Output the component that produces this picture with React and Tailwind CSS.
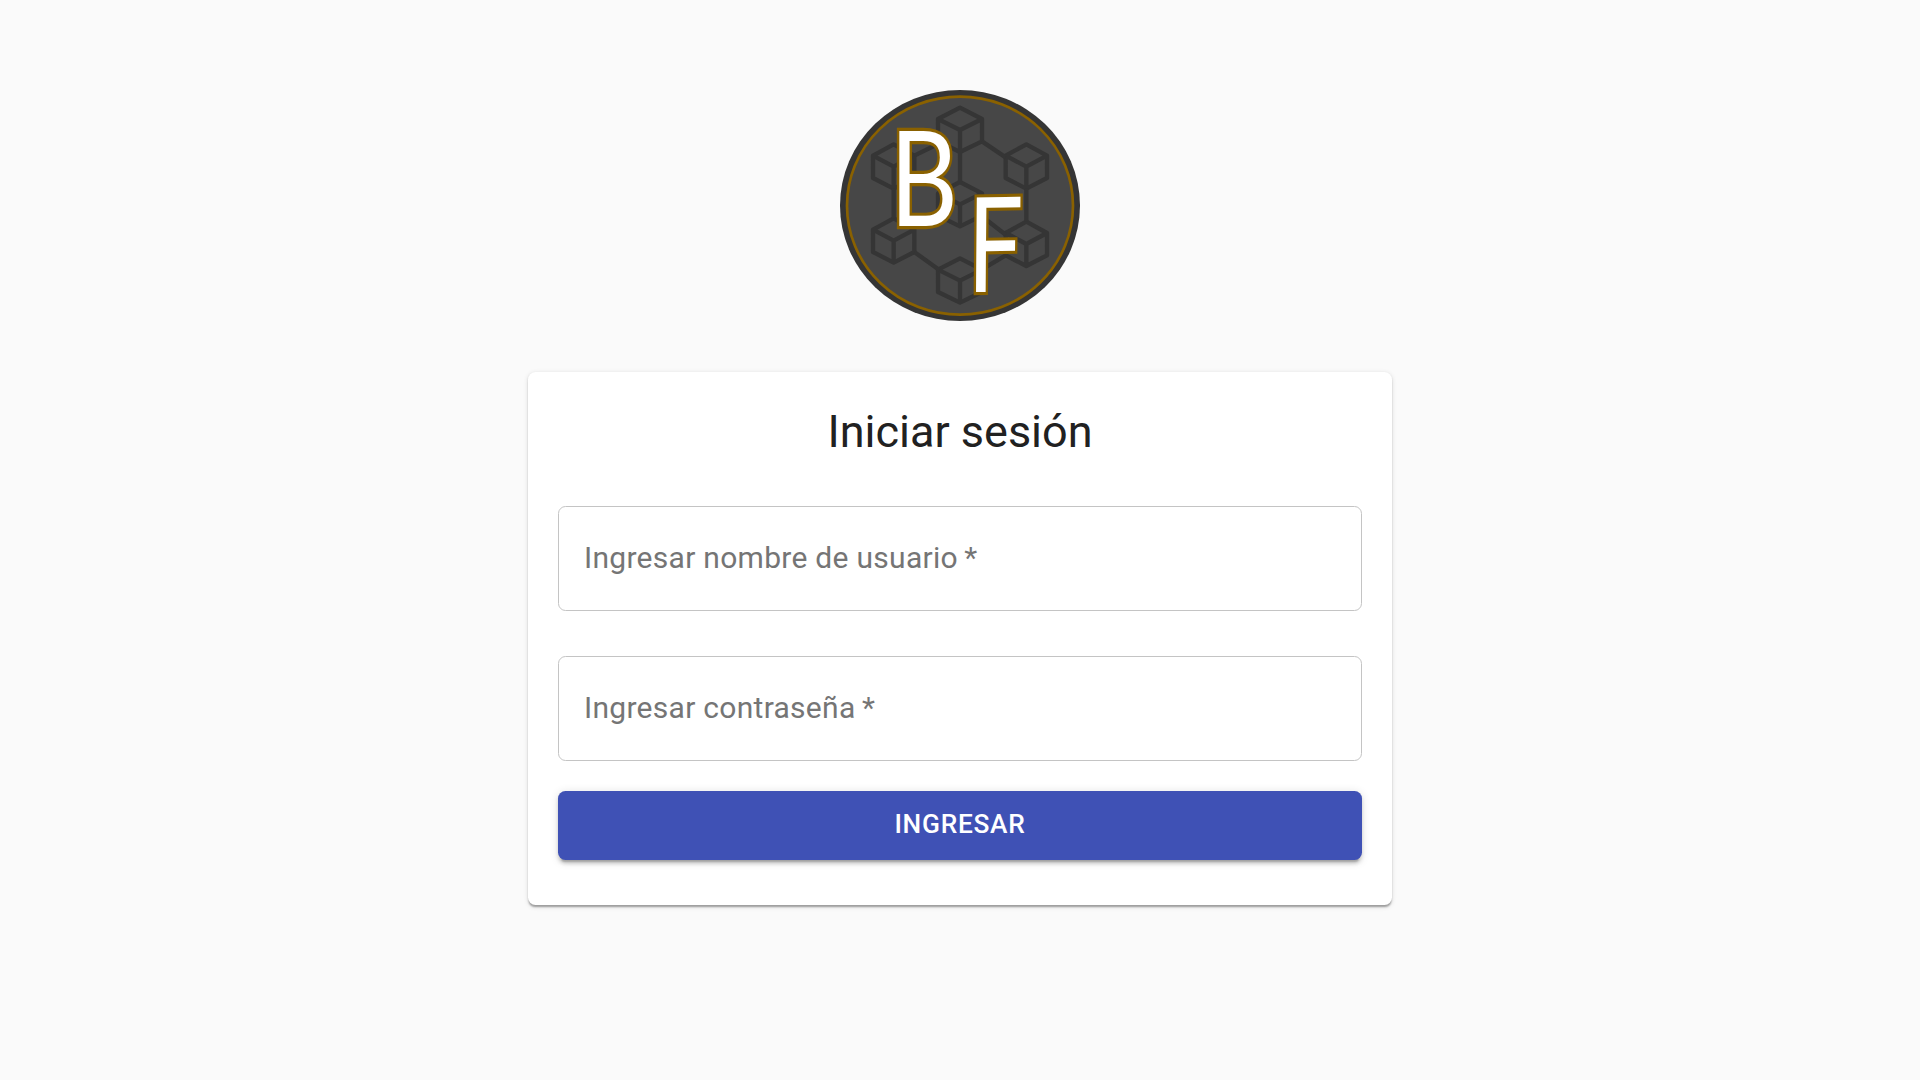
const cubes = [
  [390, 150, 66],
  [589, 260, 62],
  [589, 492, 62],
  [390, 602, 66],
  [191, 482, 62],
  [191, 260, 62],
  [390, 373, 66],
];

function Logo() {
  return (
    <svg className="h-[231px] w-[240px]" viewBox="30 30 720 693" preserveAspectRatio="none" role="img" aria-label="BF">
      <ellipse cx="390" cy="376.500" rx="360" ry="346.500" fill="#353535" />
      <ellipse cx="390" cy="377" rx="339" ry="327" fill="#474747" stroke="#8a6100" strokeWidth="8" />
      <g fill="none" stroke="#353535" strokeWidth="13" strokeLinejoin="round">
        {cubes.map(([x, y, w]) => (
          <path
            key={`${x}-${y}`}
            d={`M${x} ${y - 67}L${x + w} ${y - 33}V${y + 34}L${x} ${y + 66}L${x - w} ${y + 34}V${y - 33}ZM${x - w} ${y - 33}L${x} ${y}L${x + w} ${y - 33}M${x} ${y}V${y + 66}`}
          />
        ))}
        <path d="M456 184L527 232M390 216V306M589 326V425M191 326V415M253 516L328 570M527 526L456 568M253 227L324 192M470 420L527 464" />
      </g>
      <g
        fill="#fff"
        stroke="#8a6100"
        strokeWidth="19"
        className="font-['Lato',sans-serif] [paint-order:stroke]"
        fontSize="400"
      >
        <text transform="translate(179 438) scale(0.79 0.995)">B</text>
        <text transform="translate(411 637) skewY(-1) skewX(-0.5) scale(0.74 0.99)">F</text>
      </g>
    </svg>
  );
}

function Field({ label }) {
  return (
    <div className="flex h-[105px] items-center rounded-[7.5px] border border-[#c4c4c4] px-[25px] pb-[2px] text-[30px] leading-none tracking-[0.282px] text-[#757575]">
      {label}
      {"\u2009*"}
    </div>
  );
}

export default function App() {
  return (
    <main className="flex min-h-screen flex-col items-center bg-[#fafafa] pt-[90px] font-['Roboto',sans-serif]">
      <Logo />
      <form className="mt-[51px] flex h-[533px] w-[864px] flex-col rounded-[7.5px] bg-white px-[30px] pt-[30px] shadow-[0px_3.75px_1.875px_-1.875px_rgba(0,0,0,0.2),0px_1.875px_1.875px_0px_rgba(0,0,0,0.14),0px_1.875px_5.625px_0px_rgba(0,0,0,0.12)]">
        <h1 className="text-center text-[45px] leading-[60px] text-[#212121]">Iniciar sesión</h1>
        <div className="mt-[44px] flex flex-col gap-[45px]">
          <Field label="Ingresar nombre de usuario" />
          <Field label="Ingresar contraseña" />
        </div>
        <button
          type="button"
          className="mt-[30px] h-[69px] rounded-[7.5px] bg-[#3f51b5] pb-[2px] text-[26.25px] font-medium tracking-[0.75px] text-white shadow-[0px_5.625px_1.875px_-3.75px_rgba(0,0,0,0.2),0px_3.75px_3.75px_0px_rgba(0,0,0,0.14),0px_1.875px_9.375px_0px_rgba(0,0,0,0.12)]"
        >
          INGRESAR
        </button>
      </form>
    </main>
  );
}
